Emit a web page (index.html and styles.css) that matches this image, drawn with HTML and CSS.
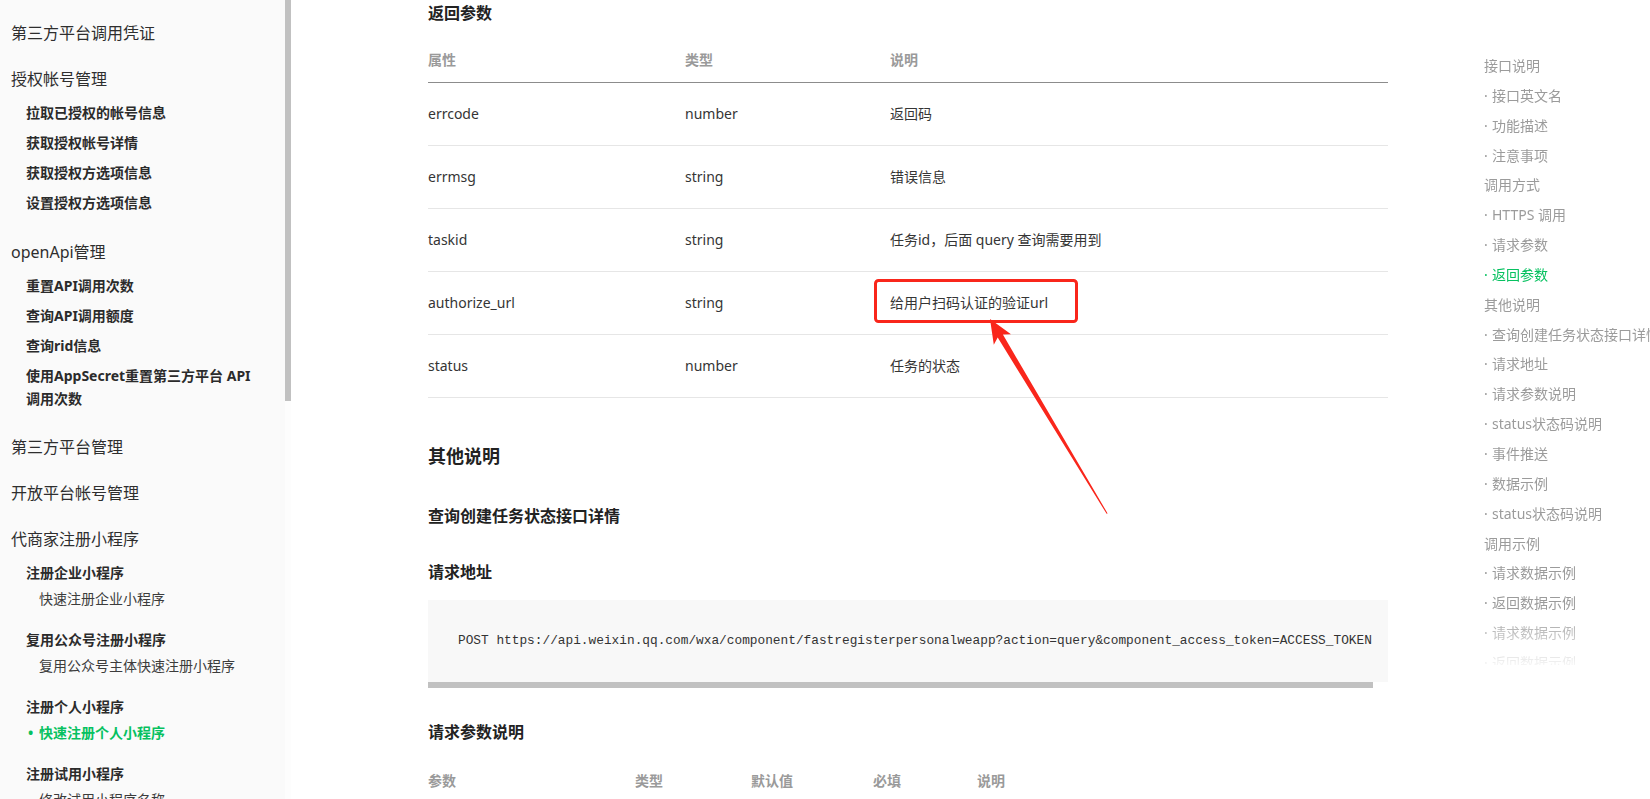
FILE: index.html
```html
<!DOCTYPE html>
<html lang="zh-CN">
<head>
  <meta charset="UTF-8">
  <meta name="viewport" content="width=device-width, initial-scale=1.0">
  <title>快速注册个人小程序</title>
  <link rel="stylesheet" href="styles.css">
</head>
<body>
  <aside class="sidebar">
    <nav class="side-nav">
      <div class="side-group"><div class="side-title">第三方平台调用凭证</div></div>
      <div class="side-group">
        <div class="side-title">授权帐号管理</div>
        <ul class="side-list">
          <li>拉取已授权的帐号信息</li>
          <li>获取授权帐号详情</li>
          <li>获取授权方选项信息</li>
          <li>设置授权方选项信息</li>
        </ul>
      </div>
      <div class="side-group">
        <div class="side-title">openApi管理</div>
        <ul class="side-list">
          <li>重置API调用次数</li>
          <li>查询API调用额度</li>
          <li>查询rid信息</li>
          <li>使用AppSecret重置第三方平台 API 调用次数</li>
        </ul>
      </div>
      <div class="side-group"><div class="side-title">第三方平台管理</div></div>
      <div class="side-group"><div class="side-title">开放平台帐号管理</div></div>
      <div class="side-group">
        <div class="side-title">代商家注册小程序</div>
        <div class="side-sub">
          <div class="side-sub-title">注册企业小程序</div>
          <ul class="side-leaves"><li>快速注册企业小程序</li></ul>
        </div>
        <div class="side-sub">
          <div class="side-sub-title">复用公众号注册小程序</div>
          <ul class="side-leaves"><li>复用公众号主体快速注册小程序</li></ul>
        </div>
        <div class="side-sub">
          <div class="side-sub-title">注册个人小程序</div>
          <ul class="side-leaves"><li class="active">快速注册个人小程序</li></ul>
        </div>
        <div class="side-sub">
          <div class="side-sub-title">注册试用小程序</div>
          <ul class="side-leaves">
            <li>修改试用小程序名称</li>
            <li>试用小程序快速认证</li>
          </ul>
        </div>
      </div>
    </nav>
    <div class="side-scroll"><div class="side-thumb"></div></div>
  </aside>

  <main class="doc">
    <h3>返回参数</h3>
    <table class="params params-ret">
      <thead>
        <tr><th>属性</th><th>类型</th><th>说明</th></tr>
      </thead>
      <tbody>
        <tr><td>errcode</td><td>number</td><td>返回码</td></tr>
        <tr><td>errmsg</td><td>string</td><td>错误信息</td></tr>
        <tr><td>taskid</td><td>string</td><td>任务id，后面 query 查询需要用到</td></tr>
        <tr><td>authorize_url</td><td>string</td><td>给用户扫码认证的验证url</td></tr>
        <tr><td>status</td><td>number</td><td>任务的状态</td></tr>
      </tbody>
    </table>

    <h2>其他说明</h2>
    <h3 class="h3-first">查询创建任务状态接口详情</h3>
    <h3>请求地址</h3>
    <div class="code-box">
      <pre class="code">POST https://api.weixin.qq.com/wxa/component/fastregisterpersonalweapp?action=query&amp;component_access_token=ACCESS_TOKEN</pre>
      <div class="code-scroll"><div class="code-thumb"></div></div>
    </div>

    <h3>请求参数说明</h3>
    <table class="params params-req">
      <thead>
        <tr><th>参数</th><th>类型</th><th>默认值</th><th>必填</th><th>说明</th></tr>
      </thead>
    </table>
  </main>

  <nav class="toc">
    <ul>
      <li>接口说明</li>
      <li class="sub">接口英文名</li>
      <li class="sub">功能描述</li>
      <li class="sub">注意事项</li>
      <li>调用方式</li>
      <li class="sub">HTTPS 调用</li>
      <li class="sub">请求参数</li>
      <li class="sub active">返回参数</li>
      <li>其他说明</li>
      <li class="sub">查询创建任务状态接口详情</li>
      <li class="sub">请求地址</li>
      <li class="sub">请求参数说明</li>
      <li class="sub">status状态码说明</li>
      <li class="sub">事件推送</li>
      <li class="sub">数据示例</li>
      <li class="sub">status状态码说明</li>
      <li>调用示例</li>
      <li class="sub">请求数据示例</li>
      <li class="sub">返回数据示例</li>
      <li class="sub">请求数据示例</li>
      <li class="sub">返回数据示例</li>
    </ul>
  </nav>

  <!-- 标注：红框和箭头 -->
  <svg class="markup" width="1650" height="799" viewBox="0 0 1650 799">
    <rect x="875.5" y="280.5" width="201" height="41" rx="3" fill="none" stroke="#f9261b" stroke-width="3"/>
    <polygon fill="#f9261b" points="990,319 1011,334.3 1002.9,334.6 1107.6,513.4 1106.6,513.8 997.7,337.6 993.8,344.7"/>
  </svg>
</body>
</html>
```

FILE: styles.css
```css
html, body {
  margin: 0;
  height: 100%;
}
body {
  position: relative;
  display: flex;
  overflow: hidden;
  font-family: "Noto Sans", "Noto Sans CJK SC", sans-serif;
  color: #353535;
  background: #fff;
}
ul {
  list-style: none;
  margin: 0;
  padding: 0;
}

/* 左侧导航 */
.sidebar {
  flex: 0 0 291px;
  display: flex;
  height: 799px;
  overflow: hidden;
}
.side-nav {
  flex: 0 0 285px;
  padding: 10px 0 0;
  background: #fafafa;
}
.side-scroll {
  flex: 0 0 6px;
  background: #fdfdfd;
}
.side-thumb {
  height: 401px;
  background: #c1c1c1;
}
.side-group {
  margin-bottom: 5px;
}
.side-title {
  padding: 11px 0 6px 11px;
  font-size: 16px;
  line-height: 24px;
  color: #2e2e2e;
}
.side-list {
  padding-bottom: 6.5px;
}
.side-list li,
.side-sub-title {
  padding: 4px 10px 3px 26px;
  font-size: 14px;
  line-height: 23px;
  font-weight: bold;
  color: #2b2b2b;
  word-break: keep-all;
}
.side-sub {
  margin-bottom: 10px;
}
.side-leaves li {
  padding: 0 0 4px 39px;
  font-size: 14px;
  line-height: 23px;
  color: #3c3c3c;
}
.side-leaves li.active {
  color: #07c160;
  font-weight: bold;
}
.side-leaves li.active::before {
  content: "•";
  display: inline-block;
  width: 11px;
  margin-left: -11px;
}

/* 正文 */
.doc {
  flex: 0 0 960px;
  min-width: 0;
  padding: 1px 0 0 137px;
}
.doc h2 {
  margin: 45px 0 0;
  font-size: 18px;
  line-height: 26px;
  color: #222;
}
.doc h3 {
  margin: 32px 0 0;
  font-size: 16px;
  line-height: 24px;
  color: #222;
}
.doc h3:first-child {
  margin-top: 0;
}
.doc h3.h3-first {
  margin-top: 35px;
}
.params {
  width: 100%;
  border-collapse: collapse;
  font-size: 14px;
  text-align: left;
}
.params-ret {
  margin-top: 13px;
}
.params-req {
  margin-top: 15px;
}
.params th {
  padding: 11px 0;
  line-height: 22px;
  color: #9a9a9a;
  font-weight: bold;
  border-bottom: 1px solid #8c8c8c;
}
.params-req th {
  border-bottom: none;
}
.params td {
  padding: 20px 0;
  line-height: 22px;
  border-bottom: 1px solid #e6e6e6;
}
.params-ret th:nth-child(1) { width: 257px; }
.params-ret th:nth-child(2) { width: 205px; }
.params-req th:nth-child(1) { width: 207px; }
.params-req th:nth-child(2) { width: 116px; }
.params-req th:nth-child(3) { width: 122px; }
.params-req th:nth-child(4) { width: 104px; }

.code-box {
  margin-top: 16px;
}
.code {
  margin: 0;
  padding: 30px;
  background: #f8f8f8;
  overflow: hidden;
  font-family: "Liberation Mono", monospace;
  font-size: 12.8px;
  line-height: 22px;
  color: #333;
}
.code-scroll {
  height: 6px;
}
.code-thumb {
  width: 945px;
  height: 6px;
  background: #c1c1c1;
}

/* 右侧目录 */
.toc {
  flex: 0 0 200px;
  margin-left: 96px;
  padding-top: 51px;
  white-space: nowrap;
}
.toc ul {
  height: 614px;
  overflow: hidden;
  -webkit-mask-image: linear-gradient(to bottom, #000 560px, transparent 620px);
  mask-image: linear-gradient(to bottom, #000 560px, transparent 620px);
}
.toc li {
  height: 29.85px;
  line-height: 29.85px;
  font-size: 14px;
  color: #9b9b9b;
}
.toc li.sub::before {
  content: "·";
  display: inline-block;
  width: 8px;
}
.toc li.active {
  color: #07c160;
}

/* 标注 */
.markup {
  position: absolute;
  top: 0;
  left: 0;
  pointer-events: none;
}
```
